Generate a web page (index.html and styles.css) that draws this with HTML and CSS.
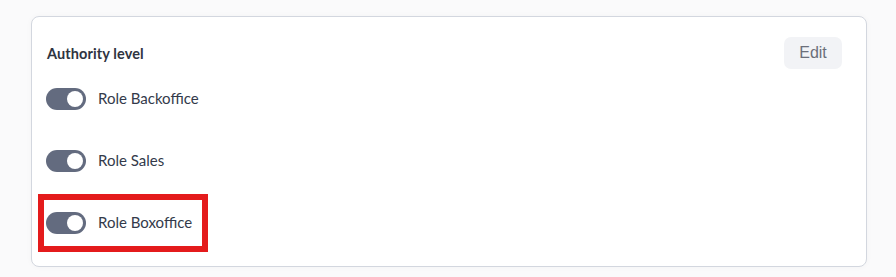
FILE: index.html
```html
<!DOCTYPE html>
<html lang="en">
<head>
<meta charset="utf-8">
<title>Authority level</title>
<link rel="stylesheet" href="styles.css">
</head>
<body>
  <div class="page">
    <section class="card">
      <div class="card-header">
        <h2 class="card-title">Authority level</h2>
        <button class="btn-edit" type="button">Edit</button>
      </div>
      <ul class="roles">
        <li class="role"><span class="toggle"><span class="knob"></span></span><span class="role-label">Role Backoffice</span></li>
        <li class="role"><span class="toggle"><span class="knob"></span></span><span class="role-label">Role Sales</span></li>
        <li class="role role-highlight"><span class="toggle"><span class="knob"></span></span><span class="role-label">Role Boxoffice</span></li>
      </ul>
    </section>
  </div>
</body>
</html>
```
FILE: styles.css
```css
* { box-sizing: border-box; }
html, body { margin: 0; padding: 0; }
body {
  background: #fafafb;
  font-family: "Lato", "Open Sans", sans-serif;
  color: #333845;
}
.page {
  padding: 16px 29px 0 31px;
  height: 277px;
  overflow: hidden;
}
.card {
  width: 836px;
  height: 251px;
  background: #ffffff;
  border: 1px solid #d3d7df;
  border-radius: 8px;
  padding: 20px 24px 20px 14px;
  box-shadow: 0 0 6px rgba(0,0,0,0.03);
}
.card-header {
  display: flex;
  align-items: center;
  justify-content: space-between;
  height: 32px;
  padding-left: 1px;
}
.card-title {
  margin: 0;
  font-size: 14.5px;
  font-weight: 700;
  color: #2f3441;
  letter-spacing: 0.1px;
}
.btn-edit {
  width: 58px;
  height: 32px;
  border: none;
  border-radius: 7px;
  background: #f2f3f6;
  color: #6b6f7a;
  font-family: "Liberation Sans", Arial, sans-serif;
  font-size: 16px;
  padding: 0;
}
.roles {
  list-style: none;
  margin: 9px 0 0 0;
  padding: 0;
  display: flex;
  flex-direction: column;
  gap: 20px;
  align-items: flex-start;
}
.role {
  display: flex;
  align-items: center;
  gap: 12px;
  height: 42px;
  padding-right: 8px;
}
.role-highlight {
  outline: 6px solid #e41b1c;
  outline-offset: 2px;
}
.toggle {
  width: 40px;
  height: 22px;
  border-radius: 11px;
  background: #636b7f;
  position: relative;
  flex: none;
}
.knob {
  position: absolute;
  right: 3px;
  top: 3px;
  width: 16px;
  height: 16px;
  border-radius: 50%;
  background: #ffffff;
}
.role-label {
  font-size: 15px;
  color: #333a4a;
  position: relative;
  top: -1px;
}
```
